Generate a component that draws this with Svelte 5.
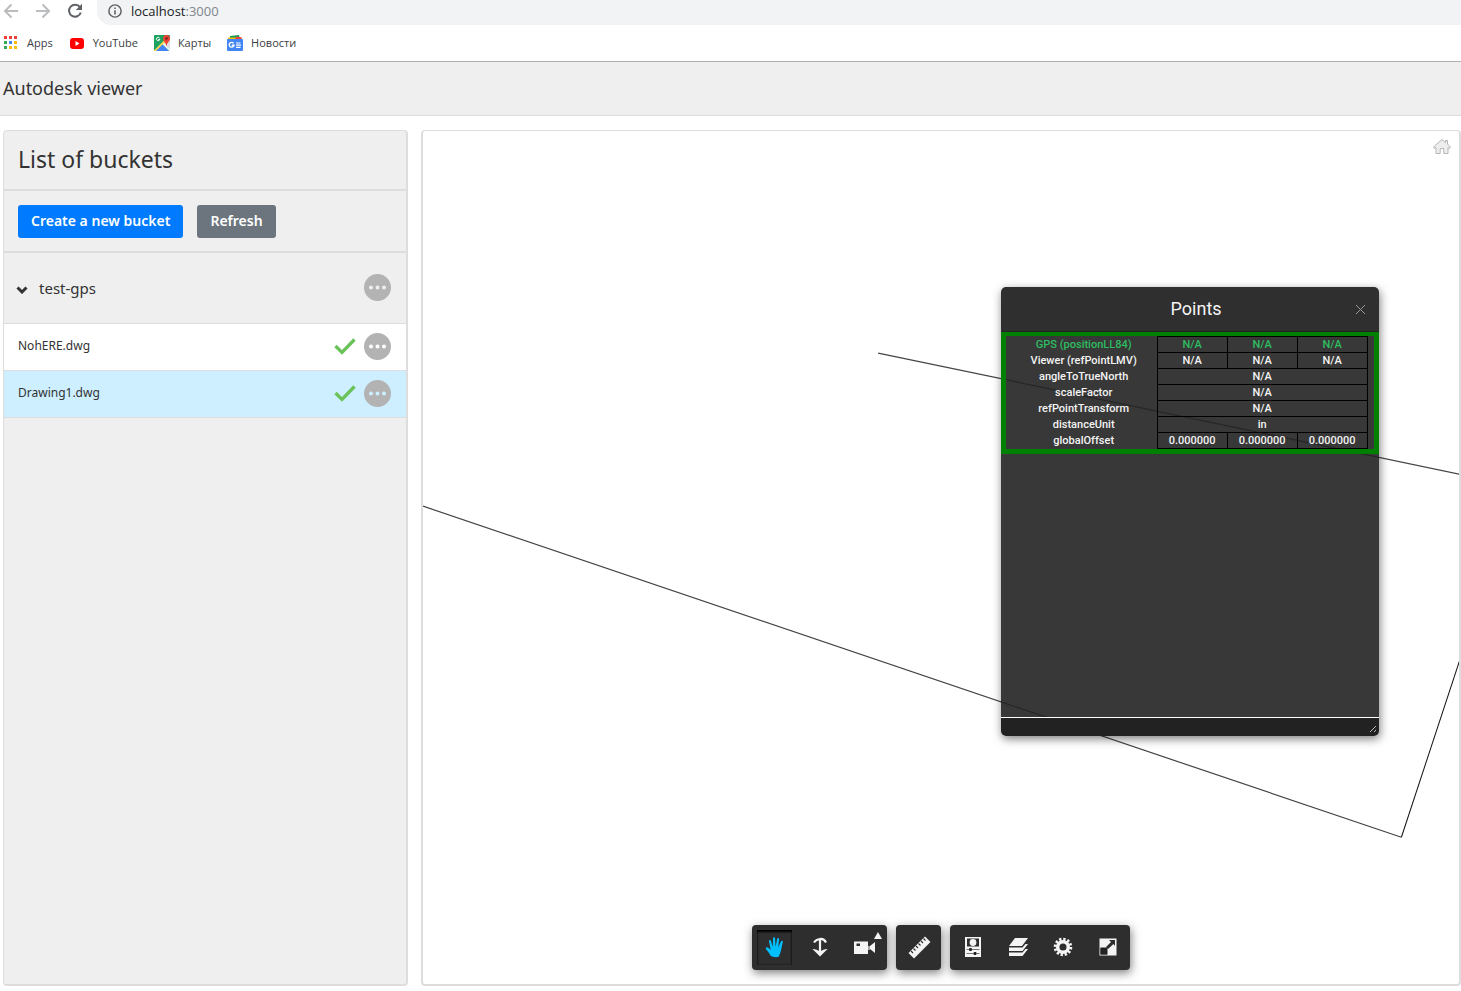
<script lang="ts">
  type Bookmark = { label: string; icon: string };

  const bookmarks: Bookmark[] = [
    { label: "Apps", icon: "apps" },
    { label: "YouTube", icon: "youtube" },
    { label: "Карты", icon: "maps" },
    { label: "Новости", icon: "news" },
  ];

  const appColors = ["#ea4335", "#ea4335", "#ea4335", "#34a853", "#4285f4", "#fbbc05", "#34a853", "#fbbc05", "#fbbc05"];

  const rows = [
    { label: "GPS (positionLL84)", values: ["N/A", "N/A", "N/A"], accent: true },
    { label: "Viewer (refPointLMV)", values: ["N/A", "N/A", "N/A"] },
    { label: "angleToTrueNorth", values: ["N/A"] },
    { label: "scaleFactor", values: ["N/A"] },
    { label: "refPointTransform", values: ["N/A"] },
    { label: "distanceUnit", values: ["in"] },
    { label: "globalOffset", values: ["0.000000", "0.000000", "0.000000"] },
  ];

  const toolGroups = [
    ["pan", "zoom", "camera"],
    ["measure"],
    ["properties", "layers", "settings", "fullscreen"],
  ];

  const files = ["NohERE.dwg", "Drawing1.dwg"];

  let selected = $state("Drawing1.dwg");
  let tool = $state("pan");
  let expanded = $state(true);
  let panelOpen = $state(true);
  let address = $state("localhost:3000");
</script>

{#snippet more(name: string)}
  <button class="more" aria-label={`Actions for ${name}`}>
    <svg viewBox="0 0 27 27" width="27" height="27">
      <path fill="#b3b3b3" fill-rule="evenodd" d="M13.500 0a13.500 13.500 0 1 1 0 27a13.500 13.500 0 1 1 0-27zM7 11.500a2 2 0 1 0 0 4a2 2 0 1 0 0-4zM13.500 11.500a2 2 0 1 0 0 4a2 2 0 1 0 0-4zM20 11.500a2 2 0 1 0 0 4a2 2 0 1 0 0-4z" />
    </svg>
  </button>
{/snippet}

<div class="page">
  <div class="browser">
    <div class="address_row">
      <button class="nav" aria-label="Back">
        <svg viewBox="0 0 16 16" width="16" height="16" fill="none" stroke="#babcbe" stroke-width="2"><path d="M15 8H2M8.500 1.500L2 8l6.500 6.500" /></svg>
      </button>
      <button class="nav" aria-label="Forward">
        <svg viewBox="0 0 16 16" width="16" height="16" fill="none" stroke="#babcbe" stroke-width="2"><path d="M1 8h13M7.500 1.500L14 8l-6.500 6.500" /></svg>
      </button>
      <button class="nav" aria-label="Reload">
        <svg viewBox="0 0 16 16" width="16" height="16"><path d="M13 4.300A6 6 0 1 0 13.800 9.500" fill="none" stroke="#5f6368" stroke-width="2" /><path d="M15 .8V7H8.800z" fill="#5f6368" /></svg>
      </button>
      <label class="omnibox">
        <svg viewBox="0 0 16 16" width="14" height="14"><circle cx="8" cy="8" r="7" fill="none" stroke="#5f6368" stroke-width="1.700" /><path d="M7.100 7h1.800v5H7.100zM7.100 4h1.800v1.800H7.100z" fill="#5f6368" /></svg>
        <span class="url"><span>localhost</span><span class="port">:3000</span></span>
        <input type="text" aria-label="Address" bind:value={address} />
      </label>
    </div>
    <nav class="bookmarks">
      {#each bookmarks as item}
        <a href="#{item.icon}">
          {#if item.icon === "apps"}
            <svg viewBox="0 0 13 13" width="13" height="13">
              {#each appColors as color, i}
                <rect x={(i % 3) * 5} y={Math.floor(i / 3) * 5} width="3" height="3" fill={color} />
              {/each}
            </svg>
          {:else if item.icon === "youtube"}
            <svg viewBox="0 0 16 16" width="16" height="16"><rect x="1" y="3" width="14" height="11" rx="3" fill="#f00" /><path d="M6.500 6v5l4-2.500z" fill="#fff" /></svg>
          {:else if item.icon === "maps"}
            <svg viewBox="0 0 16 16" width="16" height="16">
              <rect width="16" height="16" rx="1" fill="#1da261" />
              <path d="M16 3v12L10 8.500z" fill="#dadce0" />
              <path d="M0 15.500L11.500 4 13 6 2.500 16H0z" fill="#ffd84d" />
              <path d="M8.500 9.500L10 8l6 6.500V16h-1z" fill="#f5f5f5" />
              <path d="M2 16l6.500-6.500L15 16z" fill="#4285f4" />
              <path d="M12.500 0a3.500 3.500 0 0 1 3.500 3.500c0 3-3 3.500-3.300 7.500h-.4C12 7 9 6.500 9 3.500A3.500 3.500 0 0 1 12.500 0z" fill="#ea4335" />
              <circle cx="12.500" cy="3.500" r="1.300" fill="#7b231c" />
              <path d="M5.500 3A1.700 1.700 0 1 0 5.800 4.500H4.200" fill="none" stroke="#fff" />
            </svg>
          {:else}
            <svg viewBox="0 0 16 16" width="16" height="16">
              <path d="M3 1l9-1 1 4H3z" fill="#0c9d58" /><path d="M1 2.500h8v3H1z" fill="#fbbc05" /><path d="M9 1.500l6 1-1 3H8z" fill="#ea4335" />
              <rect y="4" width="16" height="12" rx="1" fill="#4285f4" />
              <path d="M6.500 8.200A2.400 2.400 0 1 0 7 10.300H4.800" fill="none" stroke="#fff" stroke-width="1.400" />
              <path d="M9 8h4.500M9 10.200h5M9 12.400h4.500" stroke="#fff" stroke-width="1.200" />
            </svg>
          {/if}
          <span>{item.label}</span>
        </a>
      {/each}
    </nav>
  </div>

  <header>Autodesk viewer</header>

  <main>
    <aside>
      <h1>List of buckets</h1>
      <div class="actions">
        <button class="btn primary">Create a new bucket</button>
        <button class="btn secondary">Refresh</button>
      </div>
      <div class="bucket">
        <button class="toggle" aria-expanded={expanded} onclick={() => (expanded = !expanded)}>
          <svg viewBox="0 0 12 8" width="12" height="8"><path d="M1.500 1.500L6 6l4.500-4.500" fill="none" stroke="#333" stroke-width="3" /></svg>
          test-gps
        </button>
        {@render more("test-gps")}
      </div>
      {#if expanded}
        <ul>
          {#each files as file}
            <li class:selected={file === selected}>
              <button class="file" onclick={() => (selected = file)}>{file}</button>
              <svg viewBox="0 0 22 17" width="22" height="17"><path d="M1.500 8L8 14.500 20.500 1.500" fill="none" stroke="#6ac259" stroke-width="3.300" /></svg>
              {@render more(file)}
            </li>
          {/each}
        </ul>
      {/if}
    </aside>

    <section class="viewer">
      <svg class="drawing" viewBox="0 0 1036 853" preserveAspectRatio="xMinYMin slice" fill="none">
        <path d="M455 222L1036 343M0 375L978 706" stroke="#444" stroke-width="1.200" />
        <path d="M978 706L1036 530" stroke="#111" />
      </svg>

      <button class="home" aria-label="Home">
        <svg viewBox="0 0 20 17" width="20" height="17"><path d="M10 1.500L1.500 9l1 1.500L4 9.500V15.500h4.200v-5h3.600v5H16V9.500l1.500 1 1-1.500L15.500 6V2.500h-2V4.500z" fill="#eee" stroke="#b5b5b5" /></svg>
      </button>

      {#if panelOpen}
        <div class="panel">
          <div class="panel_title">
            <h2>Points</h2>
            <button class="close" aria-label="Close" onclick={() => (panelOpen = false)}>
              <svg viewBox="0 0 11 11" width="11" height="11"><path d="M1 1l9 9M10 1l-9 9" stroke="#999" /></svg>
            </button>
          </div>
          <div class="panel_body">
            <div class="points">
              <table>
                <tbody>
                  {#each rows as row}
                    <tr class:accent={row.accent}>
                      <th scope="row">{row.label}</th>
                      {#each row.values as value}
                        <td colspan={3 / row.values.length}>{value}</td>
                      {/each}
                    </tr>
                  {/each}
                </tbody>
              </table>
            </div>
          </div>
          <div class="panel_footer">
            <svg viewBox="0 0 8 8" width="8" height="8"><path d="M1 7l6-6M5 7l2-2" stroke="#bbb" /></svg>
          </div>
        </div>
      {/if}

      <div class="toolbar">
        {#each toolGroups as group}
          <div class="group">
            {#each group as name}
              <button class:active={tool === name} aria-label={name} onclick={() => (tool = name)}>
                <svg viewBox="0 0 24 24" width="24" height="24" fill="currentColor">
                  {#if name === "pan"}
                    <path d="M7.500 20.500C6.500 18.500 5 16.500 3.300 14.500c-.9-1.100-.6-2.200.5-2.200 1.500 0 2.500 1.400 3.900 2.500L6 6.500c-.3-1.700 1.600-2.100 2-.5l1.800 6L10 3.500c0-1.800 2-1.800 2.100 0l.5 8.200 1.500-7.600c.3-1.600 2.200-1.300 2 .3l-.9 8 2.700-5.800c.7-1.400 2.300-.7 1.900.7-1 4-1.400 7-2.400 10.200-.5 1.700-1.300 2.500-1.300 4C14 22.500 9.500 22.500 7.500 20.500z" />
                  {:else if name === "zoom"}
                    <path d="M12 3.500V18M6 7.500Q8 4.500 12 4T18 7.500" fill="none" stroke="currentColor" stroke-width="2.200" /><path d="M4.500 14Q8 13.500 12 16.500Q16 13.500 19.500 14L12 21.500z" />
                  {:else if name === "camera"}
                    <path fill-rule="evenodd" d="M1 6.500h14V19H1zM3.500 8.500V11H7V8.500z" /><path d="M15 11h2v4h-2z" opacity=".6" /><path d="M17 11l5-4v11l-5-4z" />
                  {:else if name === "measure"}
                    <path d="M1.500 18L18 1.500 23.500 7 7 23.500z" /><path d="M4 16l2 2M6.500 13.500l2 2M9 11l2 2M11.500 8.500l2 2M14 6l2 2M16.500 3.500l2 2" stroke="#2e2e2e" stroke-width="1.200" />
                  {:else if name === "properties"}
                    <path fill-rule="evenodd" d="M4 2h16v20H4zM6 3.500v8h12v-8z" /><circle cx="12" cy="7.500" r="3.400" /><path d="M5.500 14.500h13M5.500 18.500h13" stroke="#777" /><path d="M9.500 13v3M14 17v3" stroke="#222" stroke-width="2.500" />
                  {:else if name === "layers"}
                    <path d="M9 3h13l-6 8H3zM3 12.500h13.500l3-3.500h2.500l-5.500 7H3zM3 17.500h13.500l3-3.500h2.500l-5.500 7H3z" />
                  {:else if name === "settings"}
                    <circle cx="12" cy="12" r="5.300" fill="none" stroke="currentColor" stroke-width="3.500" />
                    <circle cx="12" cy="12" r="7.800" fill="none" stroke="currentColor" stroke-width="3" stroke-dasharray="2.300 1.784" />
                  {:else}
                    <path fill-rule="evenodd" d="M3.500 3.500h17v17h-17zM4.500 13v6.500H11V13zM13 5l2 2-5 5 2 2 5.500-5 1.500 2V5z" /><path d="M4.500 12.500h7v7h-7z" fill="#222" />
                  {/if}
                </svg>
                {#if name === "camera"}<span class="arrow"></span>{/if}
              </button>
            {/each}
          </div>
        {/each}
      </div>
    </section>
  </main>
</div>

<style>
  :global(body) {
    margin: 0;
    background: #fff;
  }

  .page {
    display: flex;
    flex-direction: column;
    height: 100vh;
    color: #333;
    font-family: "Noto Sans", "Open Sans", sans-serif;
  }

  button {
    border: 0;
    padding: 0;
    background: none;
    color: inherit;
    font: inherit;
    cursor: pointer;
  }

  svg {
    display: block;
    flex: none;
  }

  .browser {
    border-bottom: 1px solid #b0b0b0;
    font-family: "Open Sans", sans-serif;
  }

  .address_row {
    display: flex;
    gap: 16px;
    height: 25px;
    padding-left: 3px;
  }

  .nav {
    height: 22px;
  }

  .omnibox {
    display: flex;
    flex: 1;
    align-items: center;
    gap: 9px;
    margin-left: -2px;
    padding: 0 11px 3px;
    border-radius: 0 0 0 14px;
    background: #f1f3f4;
    font-size: 13px;
    position: relative;
  }

  .url {
    color: #202124;
  }

  .port {
    color: #80868b;
  }

  /* the coloured url lies under the field until it gets focus */
  .omnibox input {
    position: absolute;
    inset: 0 0 0 34px;
    border: 0;
    outline: 0;
    padding: 0 0 3px;
    background: transparent;
    color: transparent;
    font: inherit;
  }

  .omnibox input:focus {
    background: #f1f3f4;
    color: #202124;
  }

  .bookmarks {
    display: flex;
    align-items: center;
    gap: 16px;
    height: 35px;
    padding: 0 4px 1px;
    font-size: 11px;
  }

  .bookmarks a {
    display: flex;
    align-items: center;
    gap: 8px;
    color: #3c4043;
    text-decoration: none;
  }

  .bookmarks a:first-child {
    gap: 10px;
  }

  header {
    padding: 14px 3px 15px;
    border-bottom: 1px solid #ddd;
    background: #efefef;
    font-size: 18px;
    line-height: 24px;
  }

  main {
    display: grid;
    grid-template-columns: 7fr 18fr;
    gap: 13px;
    flex: 1;
    min-height: 0;
    padding: 14px 0 5px 3px;
  }

  aside,
  .viewer {
    border: 1px solid #ddd;
    border-right-width: 2px;
    border-bottom-width: 2px;
    border-radius: 4px;
    overflow: hidden;
  }

  aside {
    background: #efefef;
  }

  h1 {
    margin: 0;
    padding: 13px 14px 15px;
    border-bottom: 2px solid #ddd;
    font-size: 23px;
    font-weight: 400;
    line-height: 30px;
  }

  .actions {
    display: flex;
    gap: 14px;
    padding: 14px 14px 13px;
    border-bottom: 2px solid #ddd;
  }

  .btn {
    padding: 0 13px 2px;
    border-radius: 3px;
    color: #fff;
    font-size: 14px;
    font-weight: 600;
    line-height: 31px;
  }

  .primary {
    background: #007bff;
  }

  .secondary {
    background: #6c757d;
  }

  .bucket,
  li {
    display: flex;
    align-items: center;
    border-bottom: 1px solid #ddd;
    padding: 0 15px 1px 14px;
  }

  .bucket {
    height: 69px;
    padding-left: 12px;
  }

  .toggle {
    display: flex;
    flex: 1;
    align-items: center;
    gap: 11px;
    padding: 0;
    font-size: 15px;
    line-height: 20px;
  }

  .toggle svg {
    margin-top: 4px;
  }

  ul {
    margin: 0;
    padding: 0;
    list-style: none;
  }

  li {
    gap: 8px;
    height: 45px;
    background: #fff;
  }

  li.selected {
    background: #cdefff;
  }

  .file {
    flex: 1;
    padding-bottom: 2px;
    font-size: 12px;
    line-height: 16px;
    text-align: left;
  }

  .viewer {
    position: relative;
    border-left-width: 2px;
    font-family: Roboto, sans-serif;
  }

  .drawing {
    position: absolute;
    inset: 0;
    width: 100%;
    height: 100%;
  }

  .home {
    position: absolute;
    top: 7px;
    right: 7px;
  }

  .panel {
    position: absolute;
    top: 156px;
    left: 578px;
    display: flex;
    flex-direction: column;
    width: 378px;
    height: 449px;
    border-radius: 5px;
    box-shadow: 1px 3px 10px rgba(0, 0, 0, 0.5);
    color: #f4f4f4;
    overflow: hidden;
  }

  .panel_title {
    display: flex;
    align-items: center;
    padding: 0 13px 0 37px;
    border-bottom: 1px solid #222;
    background: #2f2f2f;
    line-height: 44px;
  }

  h2 {
    flex: 1;
    margin: 0;
    font-size: 18px;
    font-weight: 400;
    text-align: center;
  }

  .panel_body {
    flex: 1;
    background: rgba(34, 34, 34, 0.9);
  }

  .points {
    border: 5px solid green;
    border-top-width: 4px;
    padding: 0 6px 0 5px;
  }

  table {
    width: 100%;
    border-collapse: collapse;
    table-layout: fixed;
    font-size: 11px;
    line-height: 15px;
    text-align: center;
  }

  th,
  td {
    padding: 0;
    font-weight: 500;
  }

  th {
    width: 41%;
  }

  td {
    border: 1px solid #000;
  }

  .accent {
    color: #2dbe60;
  }

  .panel_footer {
    display: flex;
    align-items: flex-end;
    justify-content: flex-end;
    height: 19px;
    padding: 0 2px 3px 0;
    box-sizing: border-box;
    border-top: 1px solid #fff;
    background: #222;
  }

  .toolbar {
    position: absolute;
    right: 0;
    bottom: 14px;
    left: 0;
    display: flex;
    justify-content: center;
    gap: 9px;
  }

  .group {
    display: flex;
    border-radius: 4px;
    background: #2e2e2e;
    box-shadow: 1px 3px 10px rgba(0, 0, 0, 0.5);
    color: #f4f4f4;
  }

  .group button {
    position: relative;
    box-sizing: border-box;
    width: 35px;
    height: 35px;
    margin: 5px;
    padding: 5px 5px 6px 6px;
  }

  .group button.active {
    box-shadow: inset 0 2px 2px #000, inset 0 0 2px #111;
    color: #00bfff;
  }

  .arrow {
    position: absolute;
    top: 2px;
    right: 0;
    border: 4px solid transparent;
    border-top: 0;
    border-bottom: 7px solid #f4f4f4;
  }
</style>
